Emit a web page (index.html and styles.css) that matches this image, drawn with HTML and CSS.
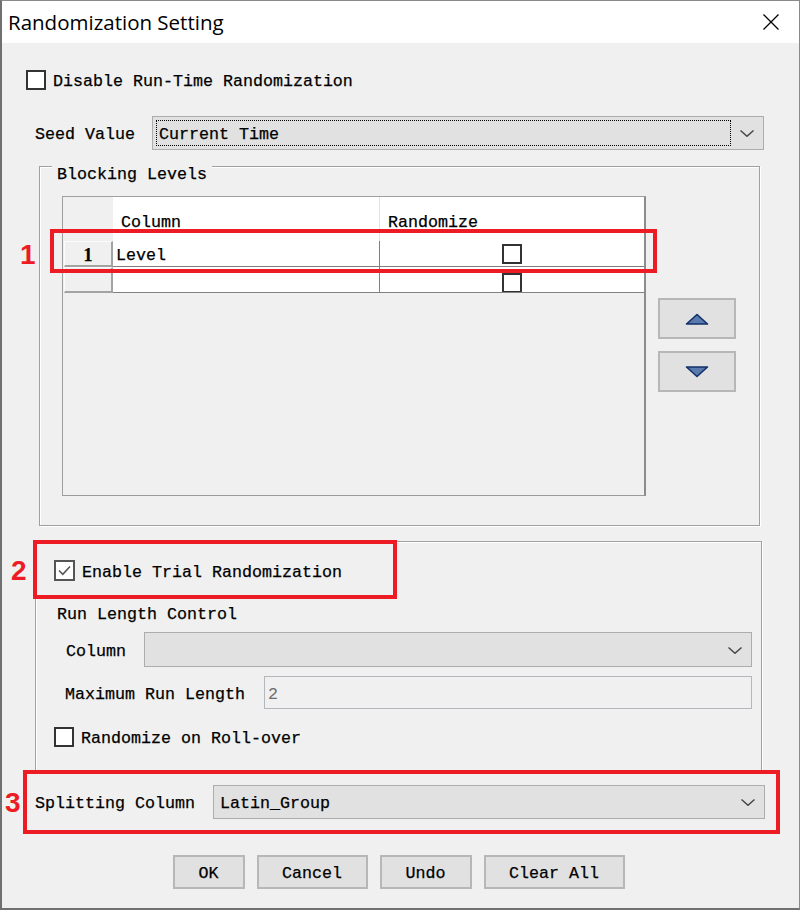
FILE: index.html
```html
<!DOCTYPE html>
<html>
<head>
<meta charset="utf-8">
<title>Randomization Setting</title>
<link rel="stylesheet" href="styles.css">
</head>
<body>
<div class="dialog">
  <div class="titlebar">
    <span class="title">Randomization Setting</span>
    <svg class="close" width="16" height="16" viewBox="0 0 16 16"><path d="M0.5 0.5L15.5 15.5M15.5 0.5L0.5 15.5" stroke="#000" stroke-width="1.3" fill="none"/></svg>
  </div>

  <div class="check top-check"><span class="box"></span><span class="ctext">Disable Run-Time Randomization</span></div>

  <div class="seed-row">
    <span class="lbl seed-lbl">Seed Value</span>
    <div class="select seed-select">
      <span class="value focus">Current Time</span>
      <span class="chev"><svg width="14" height="7" viewBox="0 0 14 7"><path d="M0.5 0.5L7 6.3L13.5 0.5" stroke="#444" stroke-width="1.4" fill="none"/></svg></span>
    </div>
  </div>

  <div class="group blocking">
    <span class="legend">Blocking Levels</span>
    <div class="blocking-body">
      <div class="grid">
        <div class="grid-head">
          <div class="corner"></div>
          <div class="hcell">Column</div>
          <div class="hcell hcell-sep">Randomize</div>
        </div>
        <div class="grid-row">
          <div class="rowhead"><b>1</b></div>
          <div class="cell">Level</div>
          <div class="cell cell-check"><span class="box"></span></div>
        </div>
        <div class="grid-row">
          <div class="rowhead"></div>
          <div class="cell"></div>
          <div class="cell cell-check cell-clip"><span class="box"></span></div>
        </div>
      </div>
      <div class="arrows">
        <div class="arrow-btn"><svg width="24" height="12" viewBox="0 0 24 12"><polygon points="1.5,11 12,1.5 22.5,11" fill="#5a79ad" stroke="#12306a" stroke-width="1.6" stroke-linejoin="round"/></svg></div>
        <div class="arrow-btn"><svg width="24" height="12" viewBox="0 0 24 12"><polygon points="1.5,1 12,10.5 22.5,1" fill="#5a79ad" stroke="#12306a" stroke-width="1.6" stroke-linejoin="round"/></svg></div>
      </div>
    </div>
  </div>

  <div class="group trial">
    <div class="check trial-check"><span class="box box-checked"><svg width="17" height="17" viewBox="0 0 17 17"><path d="M3 8.5L6.8 12.3L14 4.5" stroke="#555" stroke-width="1.6" fill="none"/></svg></span><span class="ctext">Enable Trial Randomization</span></div>
    <div class="rlc">Run Length Control</div>
    <div class="col-row">
      <span class="lbl col-lbl">Column</span>
      <div class="select col-select">
        <span class="value"></span>
        <span class="chev"><svg width="14" height="7" viewBox="0 0 14 7"><path d="M0.5 0.5L7 6.3L13.5 0.5" stroke="#444" stroke-width="1.4" fill="none"/></svg></span>
      </div>
    </div>
    <div class="max-row">
      <span class="lbl max-lbl">Maximum Run Length</span>
      <div class="input">2</div>
    </div>
    <div class="check roll-check"><span class="box"></span><span class="ctext">Randomize on Roll-over</span></div>
  </div>

  <div class="split-row">
    <span class="lbl split-lbl">Splitting Column</span>
    <div class="select split-select">
      <span class="value">Latin_Group</span>
      <span class="chev"><svg width="14" height="7" viewBox="0 0 14 7"><path d="M0.5 0.5L7 6.3L13.5 0.5" stroke="#444" stroke-width="1.4" fill="none"/></svg></span>
    </div>
  </div>

  <div class="buttons">
    <div class="btn btn-ok">OK</div>
    <div class="btn btn-cancel">Cancel</div>
    <div class="btn btn-undo">Undo</div>
    <div class="btn btn-clear">Clear All</div>
  </div>

  <div class="mark mark-1"></div>
  <div class="mark mark-2"></div>
  <div class="mark mark-3"></div>
  <span class="num num-1">1</span>
  <span class="num num-2">2</span>
  <span class="num num-3">3</span>
</div>
</body>
</html>
```

FILE: styles.css
```css
* {
  box-sizing: border-box;
}

html, body {
  margin: 0;
  padding: 0;
  background: #f0f0f0;
}

body {
  width: 800px;
  height: 910px;
  overflow: hidden;
}

.dialog {
  position: relative;
  width: 800px;
  height: 910px;
  background: #f0f0f0;
  border-left: 2px solid #707070;
  border-top: 1px solid #8a8a8a;
  border-right: 1px solid #8a8a8a;
  border-bottom: 2px solid #707070;
  display: flex;
  flex-direction: column;
  align-items: flex-start;
  font-family: "Liberation Mono", "DejaVu Sans Mono", monospace;
  font-size: 16.67px;
  line-height: 20px;
  color: #000;
  -webkit-text-stroke: 0.25px #000;
}

/* title bar */
.titlebar {
  align-self: stretch;
  height: 42px;
  background: #fff;
  display: flex;
  align-items: center;
  padding-left: 6px;
  padding-right: 20px;
  -webkit-text-stroke: 0;
}

.title {
  font-family: "Open Sans", "Noto Sans", sans-serif;
  font-size: 20.5px;
  color: #000;
  padding-bottom: 1px;
}

.close {
  margin-left: auto;
}

/* checkboxes */
.check {
  display: flex;
  align-items: center;
  gap: 7px;
  white-space: pre;
}

.ctext {
  padding-top: 2px;
  margin-bottom: -2px;
}

.box {
  display: inline-block;
  width: 20px;
  height: 20px;
  border: 2px solid #333;
  background: #fff;
  flex: none;
}

.box-checked {
  width: 21px;
  height: 21px;
  border-color: #555;
  display: flex;
  align-items: center;
  justify-content: center;
}

.top-check {
  margin: 27px 0 0 24px;
}

/* selects */
.select {
  display: flex;
  align-items: stretch;
  background: #e1e1e1;
  border: 1.5px solid #adadad;
  padding: 3px 0 3px 3px;
}

.select .value {
  flex: 1;
  display: flex;
  align-items: center;
  padding-left: 3px;
  padding-top: 4px;
  white-space: pre;
}

.select .focus {
  border: 1px dotted #000;
  padding-left: 2px;
}

.chev {
  width: 32px;
  flex: none;
  display: flex;
  align-items: center;
  justify-content: center;
  padding-top: 1px;
}

.lbl {
  white-space: pre;
  flex: none;
  padding-top: 4px;
}

.seed-row {
  margin-top: 26px;
  padding-left: 33px;
  display: flex;
  align-items: center;
  height: 34px;
  gap: 17px;
}

.seed-lbl {
  width: 100px;
}

.seed-select {
  width: 612px;
  height: 34px;
}

/* group boxes */
.group {
  border: 1px solid #a0a0a0;
  box-shadow: 1px 1px 0 #fff, inset 1px 1px 0 #fff;
  display: flex;
  flex-direction: column;
  align-items: flex-start;
}

.blocking {
  margin: 16px 0 0 37px;
  width: 721px;
  height: 360px;
}

.legend {
  margin: -2px 0 0 12px;
  padding: 0 5px;
  background: #f0f0f0;
  white-space: pre;
}

.blocking-body {
  margin-top: 11px;
  padding-left: 22px;
  display: flex;
  align-items: flex-start;
}

/* grid */
.grid {
  width: 584px;
  height: 300px;
  border: 1px solid #a0a0a0;
  border-right: 2px solid #8c8c8c;
  border-bottom: 1.5px solid #9a9a9a;
  background: #f0f0f0;
}

.grid-head,
.grid-row {
  display: grid;
  grid-template-columns: 50px 266px 1fr;
}

.grid-head {
  height: 44px;
}

.corner {
  background: #f0f0f0;
}

.hcell {
  background: #fff;
  display: flex;
  align-items: flex-end;
  padding: 0 0 8px 8px;
}

.hcell-sep {
  border-left: 1px solid #e2e2e2;
  padding-left: 8px;
}

.grid-row {
  height: 26px;
}

.rowhead {
  background: #f0f0f0;
  border-top: 1px solid #fbfbfb;
  border-left: 1px solid #fbfbfb;
  border-right: 2px solid #a3a3a3;
  border-bottom: 2px solid #a3a3a3;
  margin-left: 1px;
  display: flex;
  align-items: center;
  justify-content: center;
  padding-top: 2px;
  font-family: "Liberation Serif", serif;
  font-size: 18px;
}

.cell {
  background: #fff;
  border-bottom: 1px solid #808080;
  display: flex;
  align-items: center;
  padding-left: 3px;
  padding-top: 4px;
}

.cell-check {
  border-left: 1px solid #808080;
  justify-content: center;
  padding-left: 0;
  padding-top: 0;
}

.cell-clip {
  overflow: hidden;
  align-items: flex-start;
}

.cell-clip .box {
  margin-top: 6px;
}

.arrows {
  margin-left: 12px;
  padding-top: 102px;
  display: flex;
  flex-direction: column;
  gap: 12px;
}

.arrow-btn {
  width: 78px;
  height: 41px;
  background: #e1e1e1;
  border: 2px solid #b7b7b7;
  display: flex;
  align-items: center;
  justify-content: center;
}

/* trial group */
.trial {
  margin: 15px 0 0 33px;
  width: 727px;
  height: 230px;
}

.trial-check {
  margin: 18px 0 0 18px;
}

.rlc {
  margin-top: 24px;
  padding-left: 21px;
  white-space: pre;
}

.col-row {
  align-self: stretch;
  margin-top: 7px;
  padding: 0 9px 0 30px;
  height: 35px;
  display: flex;
  align-items: center;
  gap: 18px;
}

.col-lbl {
  width: 60px;
}

.col-select {
  flex: 1;
  height: 35px;
}

.max-row {
  align-self: stretch;
  margin-top: 9px;
  padding: 0 9px 0 29px;
  height: 33px;
  display: flex;
  align-items: center;
  gap: 19px;
}

.max-lbl {
  width: 180px;
}

.input {
  flex: 1;
  height: 33px;
  background: #f0f0f0;
  border: 1.5px solid #b4b6bb;
  color: #6d6d6d;
  -webkit-text-stroke: 0;
  display: flex;
  align-items: center;
  padding-left: 3px;
  padding-top: 4px;
}

.roll-check {
  margin: 18px 0 0 18px;
}

/* split row */
.split-row {
  align-self: stretch;
  margin-top: 14px;
  padding: 0 34px 0 33px;
  height: 34px;
  display: flex;
  align-items: center;
  gap: 18px;
}

.split-lbl {
  width: 160px;
}

.split-select {
  flex: 1;
  height: 34px;
}

/* buttons */
.buttons {
  align-self: stretch;
  margin-top: 36px;
  padding-right: 4px;
  display: flex;
  justify-content: center;
  gap: 12px;
}

.btn {
  height: 34px;
  background: #e1e1e1;
  border: 2px solid #b7b7b7;
  display: flex;
  align-items: center;
  justify-content: center;
  padding-top: 4px;
  white-space: pre;
}

.btn-ok { width: 72px; }
.btn-cancel { width: 111px; }
.btn-undo { width: 92px; }
.btn-clear { width: 141px; }

/* annotations */
.mark {
  position: absolute;
  border: 4px solid #ed1c24;
}

.mark-1 { left: 48px; top: 228px; width: 607px; height: 44px; }
.mark-2 { left: 31px; top: 539px; width: 364px; height: 59px; }
.mark-3 { left: 21px; top: 769px; width: 757px; height: 64px; }

.num {
  position: absolute;
  font-family: "Liberation Sans", Arial, sans-serif;
  font-weight: bold;
  font-size: 28px;
  line-height: 28px;
  color: #ed1c24;
  -webkit-text-stroke: 0;
}

.num-1 { left: 18px; top: 240px; }
.num-2 { left: 9px; top: 556px; }
.num-3 { left: 3px; top: 788px; }
```
